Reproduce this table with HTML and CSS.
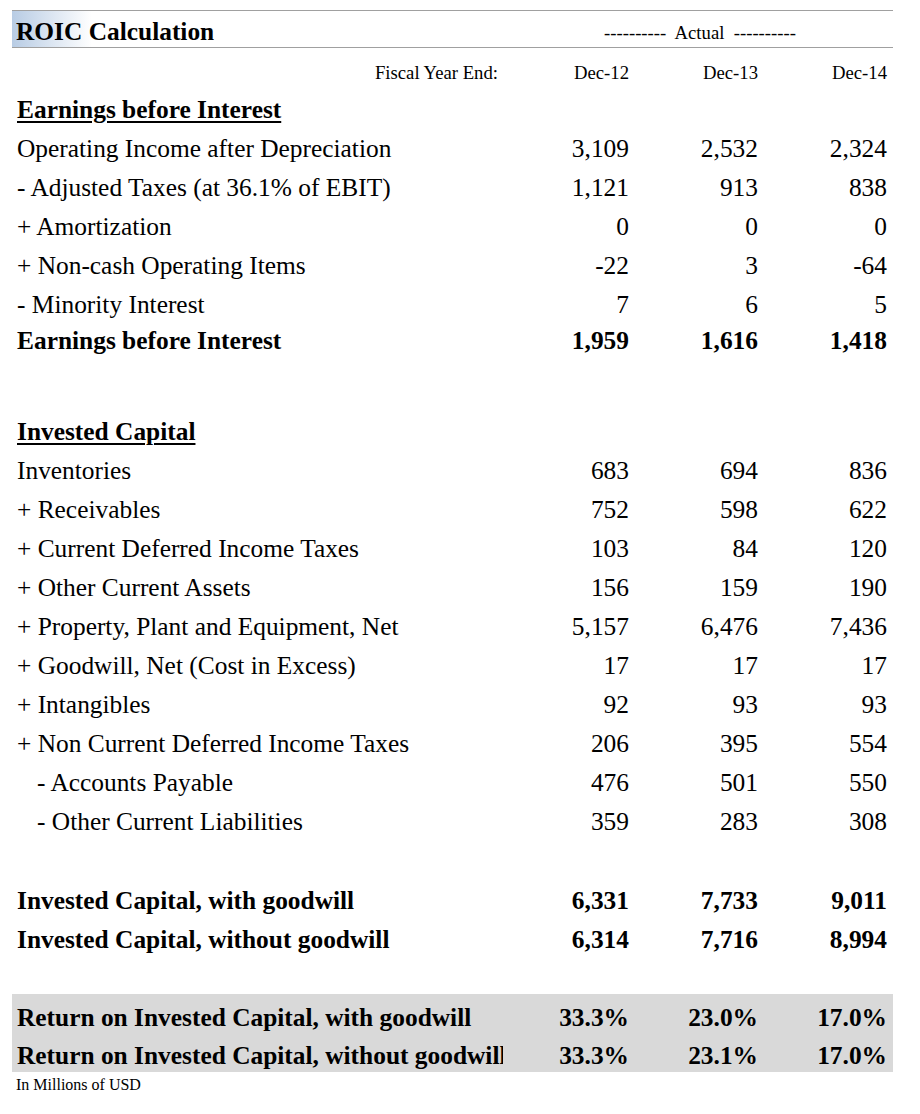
FILE: index.html
```html
<!DOCTYPE html>
<html>
<head>
<meta charset="utf-8">
<link rel="stylesheet" href="styles.css">
</head>
<body>
<div class="sheet">
  <div class="titlebar">
    <div class="title">ROIC Calculation</div>
    <div class="actual">----------&nbsp; Actual &nbsp;----------</div>
  </div>
  <div class="row fiscal">
    <div class="lbl">Fiscal Year End:</div>
    <div class="num">Dec-12</div><div class="num">Dec-13</div><div class="num">Dec-14</div>
  </div>

  <div class="row head"><div class="lbl">Earnings before Interest</div></div>
  <div class="row"><div class="lbl">Operating Income after Depreciation</div><div class="num">3,109</div><div class="num">2,532</div><div class="num">2,324</div></div>
  <div class="row"><div class="lbl">- Adjusted Taxes (at 36.1% of EBIT)</div><div class="num">1,121</div><div class="num">913</div><div class="num">838</div></div>
  <div class="row"><div class="lbl">+ Amortization</div><div class="num">0</div><div class="num">0</div><div class="num">0</div></div>
  <div class="row"><div class="lbl">+ Non-cash Operating Items</div><div class="num">-22</div><div class="num">3</div><div class="num">-64</div></div>
  <div class="row"><div class="lbl">- Minority Interest</div><div class="num">7</div><div class="num">6</div><div class="num">5</div></div>
  <div class="row total"><div class="lbl">Earnings before Interest</div><div class="num">1,959</div><div class="num">1,616</div><div class="num">1,418</div></div>

  <div class="row head gap1"><div class="lbl">Invested Capital</div></div>
  <div class="row"><div class="lbl">Inventories</div><div class="num">683</div><div class="num">694</div><div class="num">836</div></div>
  <div class="row"><div class="lbl">+ Receivables</div><div class="num">752</div><div class="num">598</div><div class="num">622</div></div>
  <div class="row"><div class="lbl">+ Current Deferred Income Taxes</div><div class="num">103</div><div class="num">84</div><div class="num">120</div></div>
  <div class="row"><div class="lbl">+ Other Current Assets</div><div class="num">156</div><div class="num">159</div><div class="num">190</div></div>
  <div class="row"><div class="lbl">+ Property, Plant and Equipment, Net</div><div class="num">5,157</div><div class="num">6,476</div><div class="num">7,436</div></div>
  <div class="row"><div class="lbl">+ Goodwill, Net (Cost in Excess)</div><div class="num">17</div><div class="num">17</div><div class="num">17</div></div>
  <div class="row"><div class="lbl">+ Intangibles</div><div class="num">92</div><div class="num">93</div><div class="num">93</div></div>
  <div class="row"><div class="lbl">+ Non Current Deferred Income Taxes</div><div class="num">206</div><div class="num">395</div><div class="num">554</div></div>
  <div class="row"><div class="lbl indent">- Accounts Payable</div><div class="num">476</div><div class="num">501</div><div class="num">550</div></div>
  <div class="row"><div class="lbl indent">- Other Current Liabilities</div><div class="num">359</div><div class="num">283</div><div class="num">308</div></div>

  <div class="row bold gap2"><div class="lbl">Invested Capital, with goodwill</div><div class="num">6,331</div><div class="num">7,733</div><div class="num">9,011</div></div>
  <div class="row bold"><div class="lbl">Invested Capital, without goodwill</div><div class="num">6,314</div><div class="num">7,716</div><div class="num">8,994</div></div>

  <div class="band">
    <div class="row bold brow"><div class="lbl">Return on Invested Capital, with goodwill</div><div class="num">33.3%</div><div class="num">23.0%</div><div class="num">17.0%</div></div>
    <div class="row bold brow"><div class="lbl">Return on Invested Capital, without goodwill</div><div class="num">33.3%</div><div class="num">23.1%</div><div class="num">17.0%</div></div>
  </div>
  <div class="footer">In Millions of USD</div>
</div>
</body>
</html>
```

FILE: styles.css
```css
html, body {
  margin: 0;
  padding: 0;
  background: #ffffff;
}

body {
  font-family: "Liberation Serif", "Times New Roman", serif;
  color: #000000;
}

.sheet {
  margin: 10px 0 0 12px;
  width: 881px;
}

.titlebar {
  display: grid;
  grid-template-columns: 491px 384px;
  padding-right: 6px;
  height: 36px;
  border-top: 1px solid #a0a0a0;
  border-bottom: 1px solid #a0a0a0;
  background: linear-gradient(to right, #b8cce4 0px, #ffffff 80px);
  align-items: end;
}

.title {
  font-weight: bold;
  font-size: 25.4px;
  line-height: 30px;
  padding-left: 4px;
  padding-bottom: 1px;
}

.actual {
  font-size: 18.7px;
  line-height: 22px;
  text-align: center;
  padding-left: 10px;
  padding-bottom: 3px;
}

.row {
  display: grid;
  grid-template-columns: 491px 126px 129px 129px;
  padding-right: 6px;
  height: 39px;
  font-size: 25.4px;
  line-height: 39px;
}

.lbl {
  padding-left: 5px;
  white-space: nowrap;
  overflow: hidden;
}

.lbl.indent {
  padding-left: 25px;
}

.num {
  text-align: right;
  white-space: nowrap;
}

.row.fiscal {
  height: 42px;
  box-sizing: border-box;
  padding-top: 14px;
  font-size: 18.7px;
  line-height: 22px;
}

.row.fiscal .lbl {
  text-align: right;
  padding-right: 5px;
}

.row.head .lbl {
  font-weight: bold;
  text-decoration: underline;
  text-decoration-thickness: 2px;
  text-underline-offset: 3px;
}

.row.total {
  font-weight: bold;
  height: 33px;
  line-height: 33px;
}

.row.bold {
  font-weight: bold;
}

.gap1 {
  margin-top: 55px;
}

.gap2 {
  margin-top: 40px;
}

.band {
  margin-top: 35px;
  height: 78px;
  box-sizing: border-box;
  padding-top: 3.5px;
  background: #d9d9d9;
}

.row.brow {
  height: 38.5px;
  line-height: 38.5px;
}

.footer {
  margin-top: 4px;
  padding-left: 4px;
  font-size: 16px;
  line-height: 18px;
}
```
